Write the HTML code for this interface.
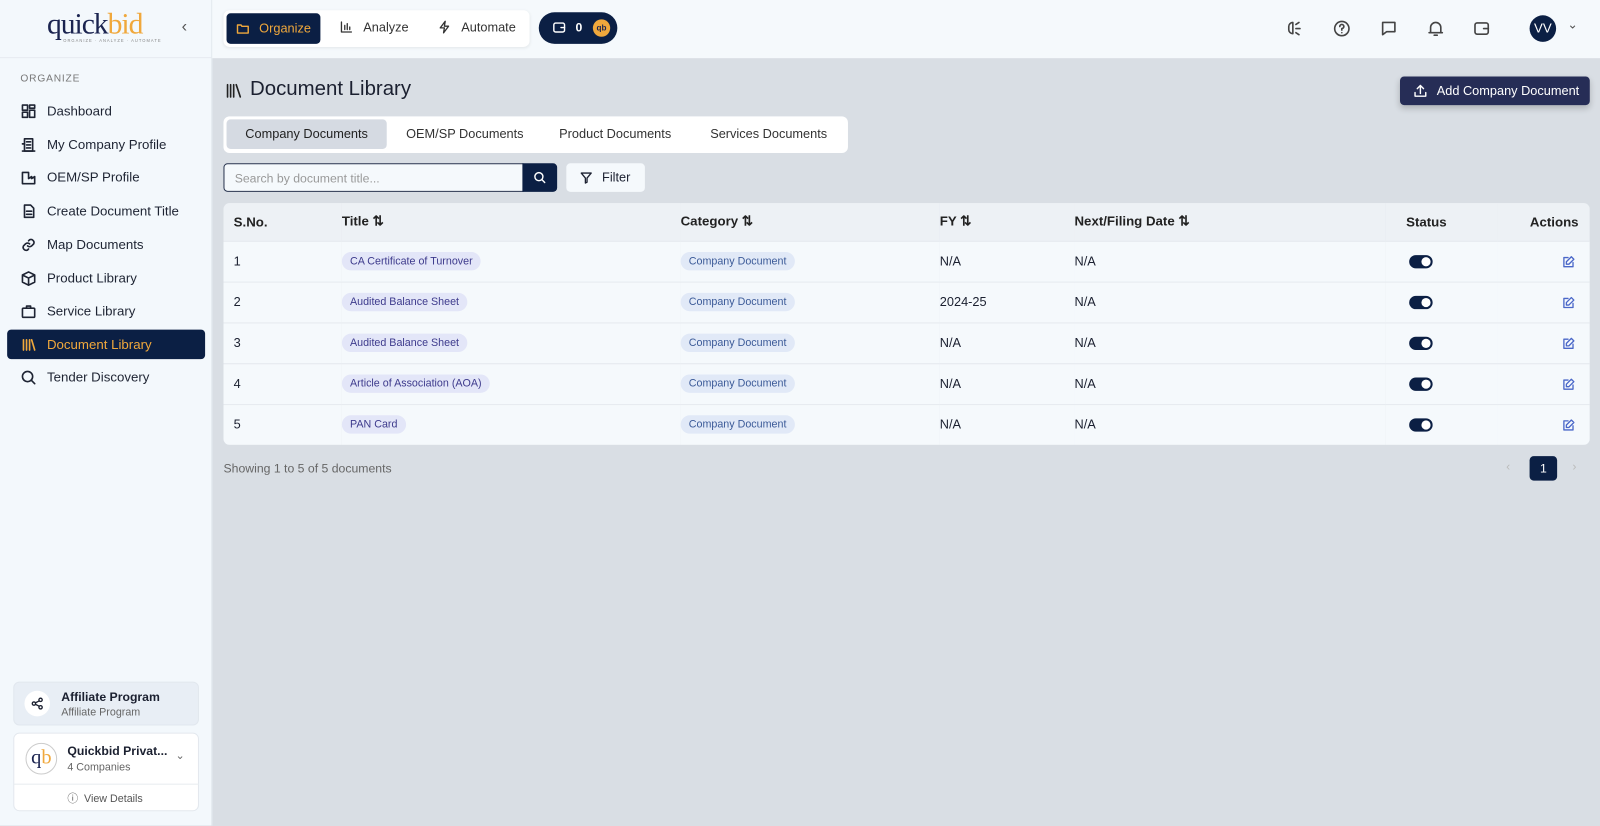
<!DOCTYPE html>
<html><head><meta charset="utf-8"><style>
*{box-sizing:border-box;margin:0;padding:0}
html,body{width:1600px;height:825px;overflow:hidden;background:#d9dee4}
#w{position:absolute;left:0;top:0;width:1568px;height:809px;transform:scale(1.0204);transform-origin:0 0;font-family:"Liberation Sans",sans-serif;color:#1b2030}
.side{position:absolute;left:0;top:0;width:208px;height:809px;background:#f3f8fc;border-right:1px solid #e3e8ee}
.top{position:absolute;left:208px;top:0;right:0;height:57px;background:#f5f9fc}
.ab{position:absolute}
svg{display:block}
.nav{position:absolute;left:7px;width:194px;height:29px;display:flex;align-items:center;padding-left:13px;font-size:13px;color:#1e2433;gap:10px}
.nav.act{background:#0b1f44;color:#f0a83c;border-radius:4px}
.ic{width:16px;height:16px;fill:none;stroke:currentColor;stroke-width:1.6;stroke-linecap:round;stroke-linejoin:round}
table{border-collapse:collapse;width:100%}
th{height:37px;font-size:13px;font-weight:bold;text-align:left;background:#edf1f5;color:#222}
td{height:40px;font-size:12.5px;border-top:1px solid #e6eaef;background:#f5f9fc}
.pill{display:inline-block;font-size:10.5px;padding:3px 8px;border-radius:9px;background:#e3e6f8;color:#3d3a8c}
.pill2{background:#e1e9f7;color:#3b5a98}
.tg{display:inline-block;width:23px;height:13px;border-radius:7px;background:#0b1f44;position:relative;vertical-align:middle}
.tg:after{content:"";position:absolute;right:2px;top:2px;width:9px;height:9px;border-radius:50%;background:#fff}
.ed{display:inline-block;width:13px;height:13px;fill:none;stroke:#4a67c8;stroke-width:1.6;stroke-linecap:round;stroke-linejoin:round;vertical-align:middle}
</style></head><body><div id="w">
<div class="side">
 <div class="ab" style="left:46px;top:8px;font-family:'Liberation Serif',serif;font-size:29px;color:#1b2450;letter-spacing:-1px">quick<span style="color:#f0a83c">bid</span></div>
 <div class="ab" style="left:62px;top:37px;font-size:4px;color:#888;letter-spacing:1px">ORGANIZE · ANALYZE · AUTOMATE</div>
 <div class="ab" style="left:178px;top:18px;font-size:16px;color:#555">‹</div>
 <div class="ab" style="left:0;top:56px;width:208px;border-top:1px solid #e6ebf0"></div>
 <div class="ab" style="left:20px;top:72px;font-size:10px;color:#777;letter-spacing:.8px">ORGANIZE</div>
 <div class="nav" style="top:94px"><svg class="ic" viewBox="0 0 16 16"><rect x="2" y="2" width="5" height="5"/><rect x="9" y="2" width="5" height="3"/><rect x="2" y="9" width="5" height="5"/><rect x="9" y="7" width="5" height="7"/></svg>Dashboard</div>
 <div class="nav" style="top:127px"><svg class="ic" viewBox="0 0 16 16"><rect x="4" y="2" width="8" height="12"/><path d="M2 7h2M2 14h12M6 5h4M6 8h4M6 11h4"/></svg>My Company Profile</div>
 <div class="nav" style="top:159px"><svg class="ic" viewBox="0 0 16 16"><path d="M2 3v11h12V7l-3 2V7l-3 2V3z"/></svg>OEM/SP Profile</div>
 <div class="nav" style="top:192px"><svg class="ic" viewBox="0 0 16 16"><path d="M4 2h6l3 3v9H4zM6 8h5M6 11h5"/></svg>Create Document Title</div>
 <div class="nav" style="top:225px"><svg class="ic" viewBox="0 0 16 16"><path d="M7 9a3 3 0 0 0 4 0l2-2a3 3 0 0 0-4-4l-1 1M9 7a3 3 0 0 0-4 0L3 9a3 3 0 0 0 4 4l1-1"/></svg>Map Documents</div>
 <div class="nav" style="top:258px"><svg class="ic" viewBox="0 0 16 16"><path d="M8 1.5l6 3v7l-6 3-6-3v-7zM2 4.5l6 3 6-3M8 7.5v7"/></svg>Product Library</div>
 <div class="nav" style="top:290px"><svg class="ic" viewBox="0 0 16 16"><rect x="2" y="5" width="12" height="9" rx="1"/><path d="M6 5V3h4v2"/></svg>Service Library</div>
 <div class="nav act" style="top:323px"><svg class="ic" viewBox="0 0 16 16"><path d="M3 3v10M6 3v10M9 3v10M11 3l3 10"/></svg>Document Library</div>
 <div class="nav" style="top:355px"><svg class="ic" viewBox="0 0 16 16"><circle cx="7" cy="7" r="5"/><path d="M11 11l3 3"/></svg>Tender Discovery</div>
 <div class="ab" style="left:13px;top:668px;width:182px;height:43px;background:#e8eef5;border-radius:6px;border:1px solid #e1e7ee"></div>
 <div class="ab" style="left:24px;top:677px;width:25px;height:25px;border-radius:50%;background:#fff"></div>
 <svg class="ab ic" style="left:30px;top:683px;width:13px;height:13px" viewBox="0 0 16 16"><circle cx="12" cy="3.5" r="2"/><circle cx="4" cy="8" r="2"/><circle cx="12" cy="12.5" r="2"/><path d="M6 7l4-2M6 9l4 2"/></svg>
 <div class="ab" style="left:60px;top:676px;font-size:12px;font-weight:bold">Affiliate Program</div>
 <div class="ab" style="left:60px;top:692px;font-size:10.5px;color:#666">Affiliate Program</div>
 <div class="ab" style="left:13px;top:718px;width:182px;height:77px;background:#fff;border-radius:6px;border:1px solid #e3e8ee"></div>
 <div class="ab" style="left:13px;top:768px;width:182px;border-top:1px solid #e8ecf0"></div>
 <div class="ab" style="left:25px;top:728px;width:31px;height:31px;border-radius:50%;border:1px solid #ccc;background:#fff;font-family:'Liberation Serif',serif;font-size:20px;text-align:center;line-height:26px;color:#1b2450">q<span style="color:#f0a83c">b</span></div>
 <div class="ab" style="left:66px;top:729px;font-size:12px;font-weight:bold">Quickbid Privat...</div>
 <div class="ab" style="left:66px;top:746px;font-size:10.5px;color:#666">4 Companies</div>
 <div class="ab" style="left:172px;top:734px;font-size:11px;color:#666">⌄</div>
 <div class="ab" style="left:66px;top:775px;font-size:10.5px;color:#555">ⓘ&nbsp; View Details</div>
</div>
<div class="top">
 <div class="ab" style="left:11px;top:10px;width:300px;height:36px;background:#fff;border-radius:6px;box-shadow:0 1px 3px rgba(0,0,0,.08)"></div>
 <div class="ab" style="left:14px;top:13px;width:92px;height:30px;background:#0b1f44;border-radius:4px;color:#f0a83c;font-size:12.5px;display:flex;align-items:center;padding-left:9px;gap:9px"><svg class="ic" style="width:14px;height:14px" viewBox="0 0 16 16"><path d="M2 4h4l1 1.5h7V13H2z"/></svg>Organize</div>
 <svg class="ab ic" style="left:125px;top:20px;width:13px;height:13px;color:#333" viewBox="0 0 16 16"><path d="M2 2v12h12M6 11V6M9 11V4M12 11V8"/></svg>
 <div class="ab" style="left:148px;top:20px;font-size:12.5px;color:#333">Analyze</div>
 <svg class="ab ic" style="left:221px;top:20px;width:13px;height:13px;color:#333" viewBox="0 0 16 16"><path d="M9 1L3 9h5l-1 6 6-8H8z"/></svg>
 <div class="ab" style="left:244px;top:20px;font-size:12.5px;color:#333">Automate</div>
 <div class="ab" style="left:320px;top:12px;width:77px;height:31px;background:#0b1f44;border-radius:16px;color:#fff;font-size:12px;font-weight:bold">
  <svg class="ic ab" style="left:13px;top:8px;width:14px;height:14px;color:#fff" viewBox="0 0 16 16"><rect x="2" y="3" width="12" height="10" rx="2"/><path d="M10 8h4"/></svg>
  <span class="ab" style="left:36px;top:8px">0</span>
  <span class="ab" style="left:53px;top:7px;width:17px;height:17px;border-radius:50%;background:#f0a83c;color:#1b2450;font-size:8px;text-align:center;line-height:17px">qb</span></div>
 <svg class="ab ic" style="left:1052px;top:19px;width:18px;height:18px;color:#444" viewBox="0 0 18 18"><path d="M7 3a4 4 0 0 0-4 4v3a4 4 0 0 0 4 4V3zM10 5l3-2M10 9h4M10 13l3 2"/></svg>
 <svg class="ab ic" style="left:1098px;top:19px;width:18px;height:18px;color:#444" viewBox="0 0 18 18"><circle cx="9" cy="9" r="7"/><path d="M7 7a2 2 0 1 1 2 2v1.5M9 13h0"/></svg>
 <svg class="ab ic" style="left:1144px;top:19px;width:18px;height:18px;color:#444" viewBox="0 0 18 18"><path d="M3 3h12v9H7l-4 3z"/></svg>
 <svg class="ab ic" style="left:1190px;top:19px;width:18px;height:18px;color:#444" viewBox="0 0 18 18"><path d="M4 13V8a5 5 0 0 1 10 0v5h1.5H2.5zM7.5 15.5h3"/></svg>
 <svg class="ab ic" style="left:1235px;top:19px;width:18px;height:18px;color:#444" viewBox="0 0 18 18"><rect x="2.5" y="3.5" width="13" height="11" rx="2"/><path d="M11 9h4.5"/></svg>
 <div class="ab" style="left:1291px;top:15px;width:26px;height:26px;border-radius:50%;background:#0b1f44;color:#fff;font-size:13px;text-align:center;line-height:26px">VV</div>
 <div class="ab" style="left:1328px;top:17px;font-size:12px;color:#555">⌄</div>
</div>
<svg class="ab ic" style="left:220px;top:80px;width:18px;height:18px;color:#222" viewBox="0 0 18 18"><path d="M3 3v12M6 3v12M9 3v12M11.5 3l4 12"/></svg>
<div class="ab" style="left:245px;top:76px;font-size:20px;color:#1b2030">Document Library</div>
<div class="ab" style="left:1372px;top:75px;width:186px;height:28px;background:#262d56;border-radius:4px;color:#fff;font-size:12.5px;display:flex;align-items:center;padding-left:13px;gap:9px;box-shadow:0 3px 6px rgba(0,0,0,.2)"><svg class="ic" style="width:14px;height:14px" viewBox="0 0 16 16"><path d="M8 11V2M4.5 5.5L8 2l3.5 3.5M2 10v4h12v-4"/></svg>Add Company Document</div>
<div class="ab" style="left:219px;top:114px;width:612px;height:36px;background:#fff;border-radius:6px"></div>
<div class="ab" style="left:222px;top:117px;width:157px;height:29px;background:#d5dae2;border-radius:4px;font-size:12.5px;text-align:center;line-height:29px;color:#222">Company Documents</div>
<div class="ab" style="left:398px;top:124px;font-size:12.5px;color:#333">OEM/SP Documents</div>
<div class="ab" style="left:548px;top:124px;font-size:12.5px;color:#333">Product Documents</div>
<div class="ab" style="left:696px;top:124px;font-size:12.5px;color:#333">Services Documents</div>
<div class="ab" style="left:219px;top:160px;width:294px;height:28px;background:#f5f9fc;border:1px solid #2a3550;border-radius:4px 0 0 4px;font-size:12px;color:#999;padding:7px 10px">Search by document title...</div>
<div class="ab" style="left:512px;top:160px;width:34px;height:28px;background:#0b1f44;border-radius:0 4px 4px 0"><svg class="ic" style="margin:7px 10px;width:14px;height:14px;color:#fff" viewBox="0 0 16 16"><circle cx="7" cy="7" r="4.5"/><path d="M10.5 10.5l3 3"/></svg></div>
<div class="ab" style="left:555px;top:160px;width:77px;height:28px;background:#f5f9fc;border-radius:4px;font-size:12.5px;display:flex;align-items:center;padding-left:13px;gap:9px"><svg class="ic" style="width:13px;height:13px" viewBox="0 0 16 16"><path d="M2 2h12l-5 6v5l-2 1V8z"/></svg>Filter</div>
<div class="ab" style="left:219px;top:199px;width:1339px;height:237px;border-radius:6px;overflow:hidden">
<table>
<tr><th style="padding-left:10px;width:116px">S.No.</th><th style="width:332px">Title ⇅</th><th style="width:254px">Category ⇅</th><th style="width:132px">FY ⇅</th><th>Next/Filing Date ⇅</th><th style="width:110px;padding-left:20px">Status</th><th style="width:90px;text-align:right;padding-right:11px">Actions</th></tr>
<tr><td style="padding-left:10px">1</td><td><span class="pill">CA Certificate of Turnover</span></td><td><span class="pill pill2">Company Document</span></td><td>N/A</td><td>N/A</td><td style="padding-left:23px"><span class="tg"></span></td><td style="text-align:right;padding-right:14px"><svg class="ed" viewBox="0 0 16 16"><path d="M13 9v5H2V3h5M11 2l3 3-6 6H5V8z"/></svg></td></tr>
<tr><td style="padding-left:10px">2</td><td><span class="pill">Audited Balance Sheet</span></td><td><span class="pill pill2">Company Document</span></td><td>2024-25</td><td>N/A</td><td style="padding-left:23px"><span class="tg"></span></td><td style="text-align:right;padding-right:14px"><svg class="ed" viewBox="0 0 16 16"><path d="M13 9v5H2V3h5M11 2l3 3-6 6H5V8z"/></svg></td></tr>
<tr><td style="padding-left:10px">3</td><td><span class="pill">Audited Balance Sheet</span></td><td><span class="pill pill2">Company Document</span></td><td>N/A</td><td>N/A</td><td style="padding-left:23px"><span class="tg"></span></td><td style="text-align:right;padding-right:14px"><svg class="ed" viewBox="0 0 16 16"><path d="M13 9v5H2V3h5M11 2l3 3-6 6H5V8z"/></svg></td></tr>
<tr><td style="padding-left:10px">4</td><td><span class="pill">Article of Association (AOA)</span></td><td><span class="pill pill2">Company Document</span></td><td>N/A</td><td>N/A</td><td style="padding-left:23px"><span class="tg"></span></td><td style="text-align:right;padding-right:14px"><svg class="ed" viewBox="0 0 16 16"><path d="M13 9v5H2V3h5M11 2l3 3-6 6H5V8z"/></svg></td></tr>
<tr><td style="padding-left:10px">5</td><td><span class="pill">PAN Card</span></td><td><span class="pill pill2">Company Document</span></td><td>N/A</td><td>N/A</td><td style="padding-left:23px"><span class="tg"></span></td><td style="text-align:right;padding-right:14px"><svg class="ed" viewBox="0 0 16 16"><path d="M13 9v5H2V3h5M11 2l3 3-6 6H5V8z"/></svg></td></tr>
</table></div>
<div class="ab" style="left:219px;top:452px;font-size:12px;color:#666">Showing 1 to 5 of 5 documents</div>
<div class="ab" style="left:1476px;top:450px;font-size:12px;color:#bbb">‹</div>
<div class="ab" style="left:1499px;top:447px;width:27px;height:24px;background:#0b1f44;border-radius:4px;color:#fff;font-size:12px;text-align:center;line-height:24px">1</div>
<div class="ab" style="left:1541px;top:450px;font-size:12px;color:#bbb">›</div>
</div></body></html>
